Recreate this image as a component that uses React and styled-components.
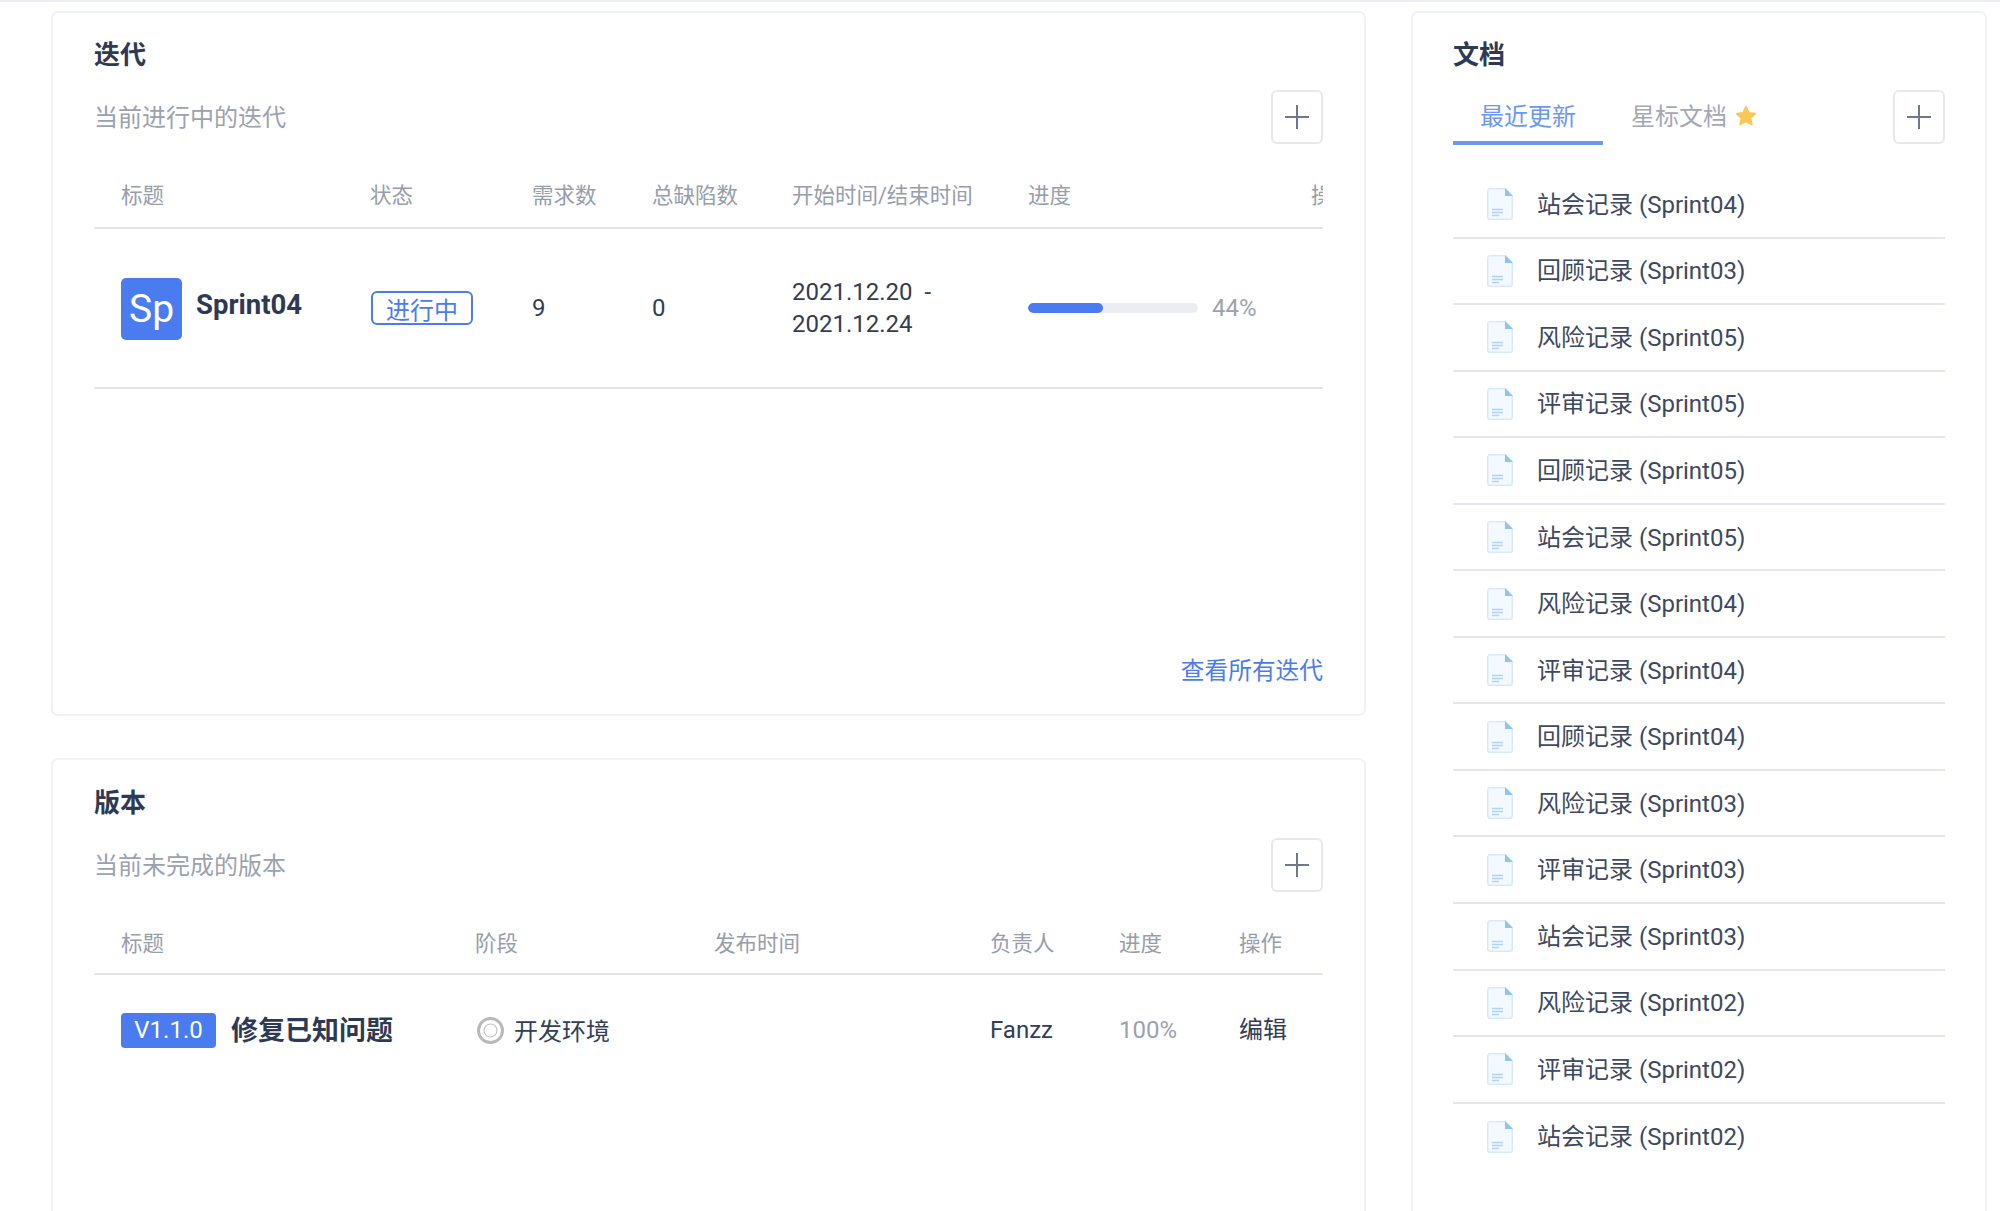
import React from "react";
import styled, { createGlobalStyle } from "styled-components";

const Global = createGlobalStyle`
  html, body { margin: 0; padding: 0; background: #fff; }
  body { font-family: Roboto, "Noto Sans CJK SC", sans-serif; color: #323d57; }
  * { box-sizing: border-box; }
`;

const Page = styled.div`
  width: 2000px;
  height: 1211px;
  overflow: hidden;
  border-top: 2px solid #ebeff3;
  padding: 9px 13px 0 51px;
  display: flex;
  gap: 45px;
  align-items: flex-start;
`;
const LeftColumn = styled.div`
  width: 1315px;
  display: flex;
  flex-direction: column;
  gap: 42px;
  flex: none;
`;
const Card = styled.section`
  display: flex;
  flex-direction: column;
  border: 2px solid #f1f2f5;
  border-radius: 7px;
  padding: ${(p) => p.$top || 24}px 41px 0 41px;
  height: ${(p) => p.$height}px;
  flex: none;
  background: #fff;
`;
const DocsCard = styled(Card)`
  width: 576px;
  padding: 24px 40px 0 40px;
  margin-left: 0;
`;
const CardTitle = styled.h2`
  margin: 0 0 17px;
  font-size: 26px;
  line-height: 36px;
  font-weight: 700;
  color: #2e3a54;
`;
const SubRow = styled.div`
  display: flex;
  align-items: center;
  justify-content: space-between;
  height: 54px;
`;
const Subtitle = styled.div`
  font-size: 24px;
  color: #9ba2af;
  margin-bottom: 3px;
`;
const AddButton = styled.button`
  width: 52px;
  height: 54px;
  padding: 0;
  border: 2px solid #e6e8ee;
  border-radius: 6px;
  background: #fff;
  display: flex;
  align-items: center;
  justify-content: center;
  color: #6f778a;
`;
const TableClip = styled.div`
  width: 1229px;
  overflow: hidden;
`;
const Grid = styled.div`
  display: grid;
  grid-template-columns: ${(p) => p.$cols};
  padding-left: 27px;
  width: max-content;
  min-width: 100%;
`;
const HeadRow = styled(Grid)`
  height: ${(p) => p.$height}px;
  padding-top: 32px;
  border-bottom: 2px solid #e3e5ea;
`;
const HeadCell = styled.div`
  font-size: 21.5px;
  line-height: 40px;
  color: #969dab;
  white-space: nowrap;
`;
const BodyRow = styled(Grid)`
  height: ${(p) => p.$height}px;
  align-items: center;
  border-bottom: ${(p) => (p.$line ? "2px solid #e3e5ea" : "none")};
`;
const Cell = styled.div`
  font-size: 24px;
  line-height: 32px;
  color: ${(p) => (p.$muted ? "#9ba2af" : "#323d57")};
  white-space: nowrap;
`;
const TitleCell = styled.div`
  display: flex;
  align-items: center;
`;
const Avatar = styled.div`
  width: 61px;
  height: 62px;
  margin-top: 2px;
  border-radius: 5px;
  background: #4a7cf0;
  color: #fff;
  font-size: 39px;
  display: flex;
  align-items: center;
  justify-content: center;
`;
const SprintName = styled.div`
  margin-left: 14px;
  font-size: 27.5px;
  font-weight: 700;
  color: #2e3a54;
  margin-bottom: 8px;
`;
const Badge = styled.div`
  width: 102px;
  height: 34px;
  margin-left: 1px;
  border: 2px solid #4a7cf0;
  border-radius: 6px;
  color: #4a7cf0;
  font-size: 24px;
  display: flex;
  align-items: center;
  justify-content: center;
`;
const ProgressCell = styled.div`
  display: flex;
  align-items: center;
  gap: 14px;
`;
const Track = styled.div`
  width: 170px;
  height: 10px;
  border-radius: 5px;
  background: #ecedf3;
  overflow: hidden;
`;
const Fill = styled.div`
  height: 100%;
  border-radius: 5px;
  background: #4a7cf0;
`;
const Percent = styled.div`
  font-size: 24px;
  color: #9ba2af;
`;
const FooterLink = styled.a`
  margin-top: auto;
  margin-bottom: 27px;
  align-self: flex-end;
  font-size: 23.7px;
  line-height: 32px;
  color: #4a7cf0;
`;
const VersionTag = styled.div`
  width: 95px;
  height: 35px;
  border-radius: 4px;
  background: #4a7cf0;
  color: #fff;
  font-size: 24px;
  display: flex;
  align-items: center;
  justify-content: center;
`;
const VersionName = styled.div`
  margin-left: 15px;
  margin-bottom: 4px;
  font-size: 27px;
  font-weight: 700;
  color: #2e3a54;
`;
const Stage = styled.div`
  display: flex;
  align-items: center;
  gap: 10px;
  font-size: 24px;
  color: #323d57;
  margin-left: 2px;
`;
const StageText = styled.span`
  margin-bottom: 2px;
`;
const Tabs = styled.div`
  display: flex;
  align-items: stretch;
  height: 54px;
  margin-top: 1px;
`;
const Tab = styled.div`
  width: ${(p) => p.$width}px;
  display: flex;
  align-items: flex-start;
  justify-content: ${(p) => (p.$active ? "center" : "flex-start")};
  gap: 8px;
  padding-top: 10px;
  font-size: 24px;
  line-height: 32px;
  color: ${(p) => (p.$active ? "#6b97f5" : "#a2a8b4")};
  border-bottom: ${(p) => (p.$active ? "4px solid #6b97f5" : "none")};
  margin-right: ${(p) => (p.$active ? 28 : 0)}px;
  height: 54px;
`;
const StarWrap = styled.span`
  display: flex;
  margin-top: 4px;
`;
const DocList = styled.div`
  margin-top: 28px;
  display: flex;
  flex-direction: column;
`;
const DocRow = styled.div`
  height: 66.55px;
  flex: none;
  display: flex;
  align-items: center;
  padding-left: 34px;
  gap: 24px;
  font-size: 24px;
  color: #3d4861;
  border-bottom: ${(p) => (p.$last ? "none" : "2px solid #e3e6ec")};
`;
const DocName = styled.span`
  white-space: pre;
  margin-bottom: 4px;
`;

const Plus = () => (
  <svg width="24" height="24" viewBox="0 0 24 24" fill="none" stroke="currentColor" strokeWidth="2">
    <path d="M12 0v24M0 12h24" />
  </svg>
);
const Star = () => (
  <svg width="22" height="22" viewBox="0 0 22 22" fill="#fbc756" stroke="#fbc756" strokeWidth="2" strokeLinejoin="round">
    <path d="M11 2l2.8 6 6.2.7-4.6 4.3 1.3 6.3L11 16.1l-5.7 3.2L6.6 13 2 8.7 8.2 8z" />
  </svg>
);
const DocIcon = () => (
  <svg width="26" height="32" viewBox="0 0 26 32" style={{ flex: "none" }}>
    <path d="M3 .75h15.5L25.25 8v21A2.25 2.25 0 0 1 23 31.25H3A2.25 2.25 0 0 1 .75 29V3A2.25 2.25 0 0 1 3 .75z" fill="#f3f9ff" stroke="#d8e9fb" strokeWidth="1.5" />
    <path d="M18 0l8 8h-8z" fill="#90c5f3" />
    <path d="M5 21.5h11M5 24.5h11M5 27.5h7" stroke="#aed3f6" strokeWidth="1.4" />
  </svg>
);
const StageIcon = () => (
  <svg width="27" height="27" viewBox="0 0 27 27" fill="none" style={{ flex: "none" }}>
    <circle cx="13.5" cy="13.5" r="12" stroke="#b9b9b9" strokeWidth="3" />
    <circle cx="13.5" cy="13.5" r="6.5" stroke="#c4c4c4" strokeWidth="1.2" />
  </svg>
);

const sprintCols = "249px 162px 120px 140px 236px 283px 100px";
const versionCols = "354px 239px 276px 129px 120px 83px";

const docs = [
  "站会记录 (Sprint04)", "回顾记录 (Sprint03)", "风险记录 (Sprint05)", "评审记录 (Sprint05)",
  "回顾记录 (Sprint05)", "站会记录 (Sprint05)", "风险记录 (Sprint04)", "评审记录 (Sprint04)",
  "回顾记录 (Sprint04)", "风险记录 (Sprint03)", "评审记录 (Sprint03)", "站会记录 (Sprint03)",
  "风险记录 (Sprint02)", "评审记录 (Sprint02)", "站会记录 (Sprint02)",
];

export default function App() {
  return (
    <>
      <Global />
      <Page>
        <LeftColumn>
          <Card $height={705}>
            <CardTitle>迭代</CardTitle>
            <SubRow>
              <Subtitle>当前进行中的迭代</Subtitle>
              <AddButton><Plus /></AddButton>
            </SubRow>
            <TableClip>
              <HeadRow $cols={sprintCols} $height={85}>
                {["标题", "状态", "需求数", "总缺陷数", "开始时间/结束时间", "进度", "操作"].map((h) => (
                  <HeadCell key={h}>{h}</HeadCell>
                ))}
              </HeadRow>
              <BodyRow $cols={sprintCols} $height={160} $line>
                <TitleCell>
                  <Avatar>Sp</Avatar>
                  <SprintName>Sprint04</SprintName>
                </TitleCell>
                <Badge>进行中</Badge>
                <Cell>9</Cell>
                <Cell>0</Cell>
                <Cell>2021.12.20&nbsp; -<br />2021.12.24</Cell>
                <ProgressCell>
                  <Track><Fill style={{ width: "44%" }} /></Track>
                  <Percent>44%</Percent>
                </ProgressCell>
                <span />
              </BodyRow>
            </TableClip>
            <FooterLink>查看所有迭代</FooterLink>
          </Card>
          <Card $height={500} $top={25}>
            <CardTitle>版本</CardTitle>
            <SubRow>
              <Subtitle>当前未完成的版本</Subtitle>
              <AddButton><Plus /></AddButton>
            </SubRow>
            <TableClip>
              <HeadRow $cols={versionCols} $height={83}>
                {["标题", "阶段", "发布时间", "负责人", "进度", "操作"].map((h) => (
                  <HeadCell key={h}>{h}</HeadCell>
                ))}
              </HeadRow>
              <BodyRow $cols={versionCols} $height={110}>
                <TitleCell>
                  <VersionTag>V1.1.0</VersionTag>
                  <VersionName>修复已知问题</VersionName>
                </TitleCell>
                <Stage><StageIcon /><StageText>开发环境</StageText></Stage>
                <span />
                <Cell>Fanzz</Cell>
                <Cell $muted>100%</Cell>
                <Cell>编辑</Cell>
              </BodyRow>
            </TableClip>
          </Card>
        </LeftColumn>
        <DocsCard $height={1300}>
          <CardTitle>文档</CardTitle>
          <SubRow>
            <Tabs>
              <Tab $active $width={150}>最近更新</Tab>
              <Tab $width={180}>星标文档<StarWrap><Star /></StarWrap></Tab>
            </Tabs>
            <AddButton><Plus /></AddButton>
          </SubRow>
          <DocList>
            {docs.map((d, i) => (
              <DocRow key={i} $last={i === docs.length - 1}>
                <DocIcon />
                <DocName>{d}</DocName>
              </DocRow>
            ))}
          </DocList>
        </DocsCard>
      </Page>
    </>
  );
}
